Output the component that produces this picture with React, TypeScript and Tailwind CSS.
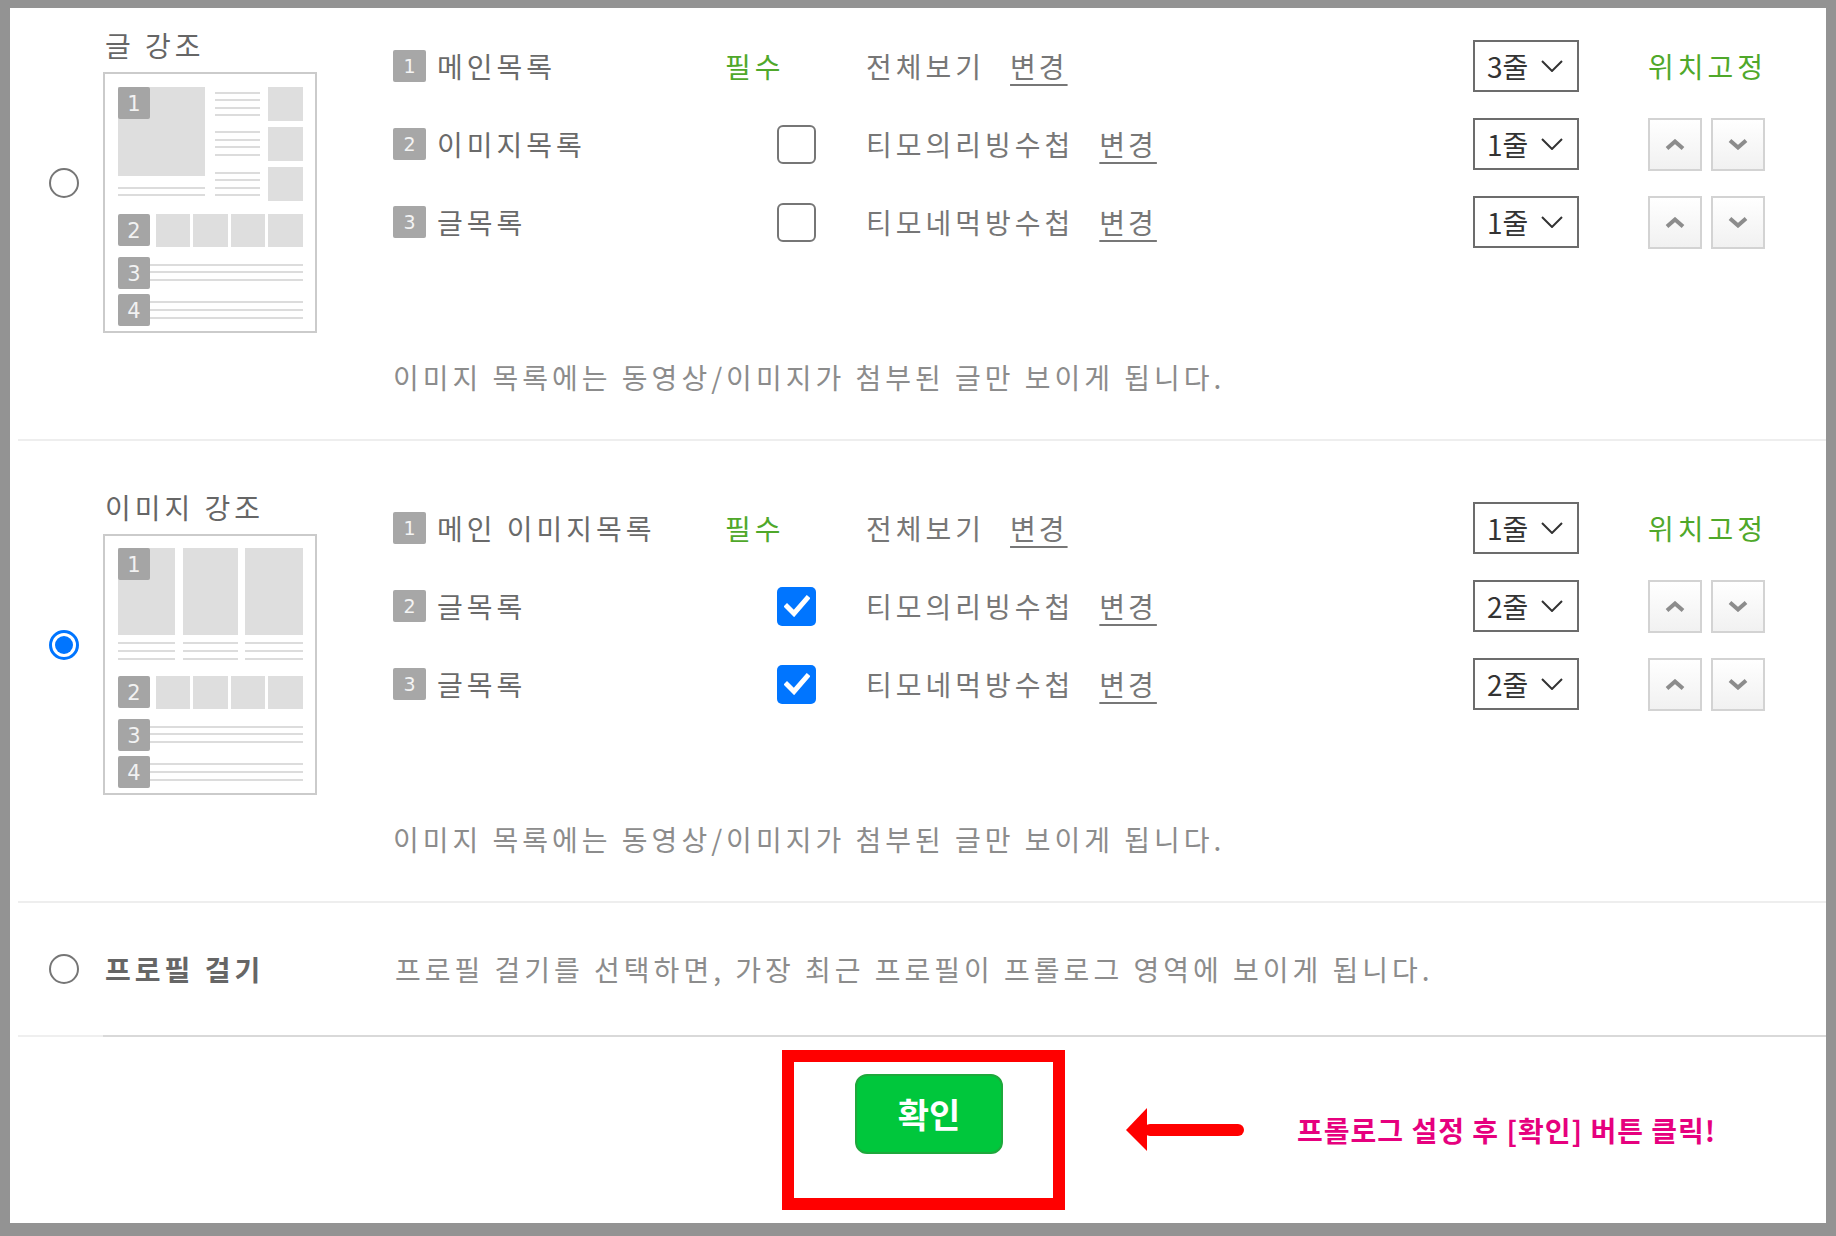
import React from "react";

const KR = "font-['Noto_Sans_CJK_KR','Noto_Sans',sans-serif]";

function Radio({ checked }: { checked?: boolean }) {
  if (checked) {
    return (
      <span className="flex h-[30px] w-[30px] shrink-0 items-center justify-center rounded-full border-[3px] border-[#0075ff] bg-white">
        <span className="h-[18px] w-[18px] rounded-full bg-[#0075ff]" />
      </span>
    );
  }
  return <span className="block h-[30px] w-[30px] shrink-0 rounded-full border-2 border-[#767676] bg-white" />;
}

function Checkbox({ checked }: { checked?: boolean }) {
  if (checked) {
    return (
      <span className="flex h-[39px] w-[39px] items-center justify-center rounded-[5px] bg-[#0075ff]">
        <svg width="26" height="22" viewBox="0 0 26 22">
          <path d="M3 11.5 L10 18.5 L23 3.5" fill="none" stroke="#fff" strokeWidth="5" strokeLinecap="square" strokeLinejoin="miter" />
        </svg>
      </span>
    );
  }
  return <span className="block h-[39px] w-[39px] rounded-[6px] border-2 border-[#767676] bg-white" />;
}

function Badge({ n }: { n: number }) {
  return (
    <span className="flex h-[32px] w-[33px] shrink-0 items-center justify-center rounded-[2px] bg-[#a7a7a7] font-['DejaVu_Sans',sans-serif] text-[19px] leading-none text-[#f4f4f4]">
      {n}
    </span>
  );
}

function Select({ value }: { value: string }) {
  return (
    <div className="flex h-[52px] w-[106px] shrink-0 items-center border-2 border-[#6c6c6c] bg-white pl-[12px]">
      <span className="text-[28px] leading-none text-[#333]">{value}</span>
      <svg className="ml-[13px]" width="22" height="12" viewBox="0 0 22 12">
        <polyline points="1,1 11,11 21,1" fill="none" stroke="#333" strokeWidth="2" />
      </svg>
    </div>
  );
}

function MoveBtn({ up }: { up?: boolean }) {
  return (
    <span className="flex h-[53px] w-[54px] items-center justify-center border-2 border-[#d3d3d3] bg-gradient-to-b from-white to-[#f1f1f1]">
      <svg width="20" height="11" viewBox="0 0 20 11">
        {up ? (
          <polyline points="2,9.5 10,2.5 18,9.5" fill="none" stroke="#8c8c8c" strokeWidth="4" />
        ) : (
          <polyline points="2,1.5 10,8.5 18,1.5" fill="none" stroke="#8c8c8c" strokeWidth="4" />
        )}
      </svg>
    </span>
  );
}

type RowProps = {
  n: number;
  label: string;
  required?: boolean;
  checked?: boolean;
  name: string;
  lines: string;
  fixed?: boolean;
};

function Row({ n, label, required, checked, name, lines, fixed }: RowProps) {
  return (
    <div className="flex h-[78px] items-center">
      <div className="flex w-[332px] items-center gap-[11px]">
        <Badge n={n} />
        <span className="text-[28px] leading-none tracking-[4px] text-[#6a6a6a]">{label}</span>
      </div>
      <div className="flex w-[141px] items-center">
        {required ? (
          <span className="text-[28px] leading-none tracking-[4px] text-[#4fa82a]">필수</span>
        ) : (
          <span className="ml-[52px]">
            <Checkbox checked={checked} />
          </span>
        )}
      </div>
      <div className="flex w-[607px] items-center">
        <span className="text-[28px] leading-none tracking-[4px] text-[#777]">{name}</span>
        <span className="ml-[25px] text-[28px] leading-none tracking-[3px] text-[#777] underline decoration-2 underline-offset-[6px]">
          변경
        </span>
      </div>
      <Select value={lines} />
      <div className="ml-[69px] flex items-center">
        {fixed ? (
          <span className="text-[28px] leading-none tracking-[4px] text-[#4fa82a]">위치고정</span>
        ) : (
          <div className="flex gap-[9px]">
            <MoveBtn up />
            <MoveBtn />
          </div>
        )}
      </div>
    </div>
  );
}

function ThumbBadge({ x, y, n }: { x: number; y: number; n: number }) {
  return (
    <g>
      <rect x={x} y={y} width="32" height="32" rx="2" fill="#a5a5a5" />
      <text x={x + 16} y={y + 24} textAnchor="middle" fontSize="21" fill="#f2f2f2" fontFamily="DejaVu Sans, sans-serif">
        {n}
      </text>
    </g>
  );
}

function Lines({ x1, x2, ys }: { x1: number; x2: number; ys: number[] }) {
  return (
    <g>
      {ys.map((y) => (
        <line key={y} x1={x1} x2={x2} y1={y} y2={y} stroke="#dcdcdc" strokeWidth="2" />
      ))}
    </g>
  );
}

function ThumbBottom() {
  return (
    <g>
      <rect x="53" y="142" width="34" height="33" fill="#dedede" />
      <rect x="90" y="142" width="35" height="33" fill="#dedede" />
      <rect x="128" y="142" width="34" height="33" fill="#dedede" />
      <rect x="165" y="142" width="35" height="33" fill="#dedede" />
      <ThumbBadge x={15} y={142} n={2} />
      <Lines x1={47} x2={200} ys={[193, 200, 208]} />
      <ThumbBadge x={15} y={185} n={3} />
      <Lines x1={47} x2={200} ys={[230, 238, 246]} />
      <ThumbBadge x={15} y={222} n={4} />
    </g>
  );
}

function ThumbText() {
  return (
    <svg width="214" height="261" viewBox="0 0 214 261" className="block">
      <rect x="1" y="1" width="212" height="259" fill="#fff" stroke="#cbcbcb" strokeWidth="2" />
      <rect x="15" y="15" width="87" height="89" fill="#dedede" />
      <ThumbBadge x={15} y={15} n={1} />
      <Lines x1={15} x2={102} ys={[116, 123]} />
      <Lines x1={112} x2={157} ys={[21, 28, 36, 43, 60, 68, 75, 83, 101, 108, 116, 123]} />
      <rect x="165" y="15" width="35" height="34" fill="#dedede" />
      <rect x="165" y="55" width="35" height="34" fill="#dedede" />
      <rect x="165" y="95" width="35" height="34" fill="#dedede" />
      <ThumbBottom />
    </svg>
  );
}

function ThumbImage() {
  return (
    <svg width="214" height="261" viewBox="0 0 214 261" className="block">
      <rect x="1" y="1" width="212" height="259" fill="#fff" stroke="#cbcbcb" strokeWidth="2" />
      <rect x="15" y="14" width="57" height="87" fill="#dedede" />
      <rect x="80" y="14" width="55" height="87" fill="#dedede" />
      <rect x="142" y="14" width="58" height="87" fill="#dedede" />
      <ThumbBadge x={15} y={14} n={1} />
      <Lines x1={15} x2={72} ys={[109, 117, 125]} />
      <Lines x1={80} x2={135} ys={[109, 117, 125]} />
      <Lines x1={142} x2={200} ys={[109, 117, 125]} />
      <ThumbBottom />
    </svg>
  );
}

function Section({
  title,
  checked,
  thumb,
  rows,
  pt,
}: {
  title: string;
  checked?: boolean;
  thumb: React.ReactNode;
  rows: RowProps[];
  pt: string;
}) {
  return (
    <section className={`flex pb-[44px] ${pt}`}>
      <div className="flex w-[383px] shrink-0 items-center self-start">
        <span className="ml-[39px] mt-[5px]">
          <Radio checked={checked} />
        </span>
        <div className="ml-[24px] flex flex-col">
          <div className="ml-[2px] h-[36px] text-[28px] leading-[36px] tracking-[4px] text-[#666]">{title}</div>
          <div className="mt-[9px]">{thumb}</div>
        </div>
      </div>
      <div className="flex flex-col">
        {rows.map((r) => (
          <Row key={r.n} {...r} />
        ))}
        <p className="mt-[98px] h-[36px] text-[28px] leading-[36px] tracking-[4px] text-[#8c8c8c]">
          이미지 목록에는 동영상/이미지가 첨부된 글만 보이게 됩니다.
        </p>
      </div>
    </section>
  );
}

export default function App() {
  return (
    <div className={`h-[1236px] w-[1836px] bg-[#939393] pb-[13px] pl-[10px] pr-[10px] pt-[8px] ${KR}`}>
      <div className="flex h-full flex-col bg-white">
        <Section
          title="글 강조"
          pt="pt-[19px]"
          thumb={<ThumbText />}
          rows={[
            { n: 1, label: "메인목록", required: true, name: "전체보기", lines: "3줄", fixed: true },
            { n: 2, label: "이미지목록", name: "티모의리빙수첩", lines: "1줄" },
            { n: 3, label: "글목록", name: "티모네먹방수첩", lines: "1줄" },
          ]}
        />
        <div className="ml-[8px] h-[2px] bg-[#eeeeee]" />
        <Section
          title="이미지 강조"
          checked
          pt="pt-[48px]"
          thumb={<ThumbImage />}
          rows={[
            { n: 1, label: "메인 이미지목록", required: true, name: "전체보기", lines: "1줄", fixed: true },
            { n: 2, label: "글목록", checked: true, name: "티모의리빙수첩", lines: "2줄" },
            { n: 3, label: "글목록", checked: true, name: "티모네먹방수첩", lines: "2줄" },
          ]}
        />
        <div className="ml-[8px] h-[2px] bg-[#eeeeee]" />
        <section className="flex h-[132px] items-center">
          <span className="ml-[39px]">
            <Radio />
          </span>
          <span className="ml-[26px] w-[290px] text-[28px] font-bold leading-none tracking-[4px] text-[#666]">프로필 걸기</span>
          <span className="text-[28px] leading-none tracking-[4px] text-[#8c8c8c]">
            프로필 걸기를 선택하면, 가장 최근 프로필이 프롤로그 영역에 보이게 됩니다.
          </span>
        </section>
        <div className="ml-[8px] flex h-[2px]">
          <div className="w-[85px] bg-[#efefef]" />
          <div className="flex-1 bg-[#d9d9d9]" />
        </div>
        <div className="flex flex-1 items-start pt-[13px]">
          <div className="ml-[772px] h-[160px] w-[283px] border-[12px] border-[#ff0000] pl-[61px] pt-[12px]">
            <button className="flex h-[80px] w-[148px] items-center justify-center rounded-[12px] border-2 border-[#1ea83c] bg-[#00c73c] text-[34px] font-bold leading-none text-white">
              확인
            </button>
          </div>
          <div className="flex h-[160px] items-center">
            <svg className="ml-[61px]" width="120" height="44" viewBox="0 0 120 44">
              <polygon points="0,22 21,0 21,43" fill="#ff0000" />
              <rect x="18" y="16" width="100" height="12" rx="6" fill="#ff0000" />
            </svg>
            <span className="ml-[51px] text-[28px] font-bold leading-none tracking-[1px] text-[#e6007e]">
              프롤로그 설정 후 [확인] 버튼 클릭!
            </span>
          </div>
        </div>
      </div>
    </div>
  );
}
